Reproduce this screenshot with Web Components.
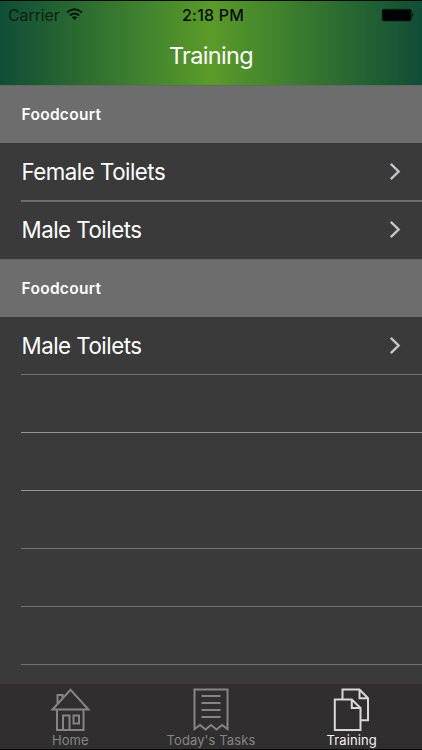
<!DOCTYPE html>
<html lang="en"><head><meta charset="utf-8"><title>Training</title>
<style>
html,body{margin:0;height:100%}
body{background:#3a3a3a;font-family:Inter,"Liberation Sans",sans-serif;overflow:hidden}
</style></head><body>
<training-screen></training-screen>
<script>
const define=(name,html,setup)=>customElements.define(name,class extends HTMLElement{
  connectedCallback(){
    if(this.shadowRoot)return;
    this.attachShadow({mode:'open'}).innerHTML=html;
    if(setup)setup(this);
  }
});

define('status-bar',`<style>
:host{display:grid;grid-template-columns:1fr auto 1fr;align-items:center;height:28px;padding:0 8px;box-sizing:border-box;color:#07140c;font-size:16px;line-height:28px}
.left{display:flex;align-items:center;gap:6px}.carrier{letter-spacing:-.1px;color:#0a2114}
.time{font-weight:500;font-size:16px;letter-spacing:.2px;color:#050b03;padding-left:4px}
.right{display:flex;justify-content:flex-end}svg{display:block}
.left svg{margin-top:-2px}.right svg{margin-top:-1px}
</style>
<div class="left"><span class="carrier">Carrier</span><svg width="17" height="13" viewBox="0 0 17 13" fill="none" stroke="#07170e" stroke-width="2"><path d="M1 4.6Q8.5-2.1 16 4.6M3.7 7.6Q8.5 3.3 13.3 7.6"/><path d="M5.8 9.3Q8.5 7.3 11.2 9.3L8.5 12Z" fill="#07170e" stroke="none"/></svg></div>
<span class="time">2:18 PM</span>
<div class="right"><svg width="33" height="14" viewBox="0 0 33 14"><rect x="1.2" y="1.2" width="29" height="11.8" rx="1.5" fill="#010302" stroke="#092816" stroke-width=".8"/><path d="M31.2 4.8q2.4 2.2 0 4.4z" fill="#031009"/></svg></div>`);

define('nav-header',`<style>
:host{display:block;height:85px;box-sizing:border-box;border-top:1px solid #030b04;background:linear-gradient(90deg,#104d37 0%,#246332 14%,#3c7e2f 31%,#5a9b28 50%,#3c7e2f 69%,#246332 86%,#104d37 100%)}
h1{margin:0;text-align:center;color:#fff;font-weight:400;font-size:23.5px;line-height:54px;height:56px;letter-spacing:-.65px}
</style><status-bar></status-bar><h1><slot></slot></h1>`);

define('section-title',`<style>
:host{display:flex;align-items:center;height:58px;box-sizing:border-box;padding:0 21.5px;background:#6d6d6d;border-top:1px solid #666;color:#fff;font-weight:600;font-size:15.5px;letter-spacing:.3px}
</style><slot></slot>`);

define('list-row',`<style>
:host{display:flex;height:58px;padding-left:21px;box-sizing:border-box;color:#fff;--line:#707070}
.body{flex:1;display:flex;align-items:center;justify-content:space-between;padding-right:21px;border-bottom:1px solid var(--line);font-size:22.3px;letter-spacing:-.5px}
.label{padding-left:.5px}
:host([bright]) .body{border-color:#969696}
:host([double]) .body{box-shadow:0 1px #68686a}
:host([last]) .body{border-color:transparent}
svg{display:block}
:host([empty]) svg{display:none}
</style><div class="body"><span class="label"><slot></slot></span><svg width="12" height="19" viewBox="0 0 12 19"><path d="M1.8 1.8 9.6 9.5 1.8 17.2" fill="none" stroke="#c5c5c9" stroke-width="2.4"/></svg></div>`);

const icons={
home:'<path d="M2.5 21.5 20.5 1.8 38.5 21.5ZM7.5 15.8V7h5v3.2M7 21.5V42h26.5V21.5M13 42V27.5h6.5V42M23.5 27.5h5.5v8h-5.5z"/>',
tasks:'<path d="M4.5 1.5h33v39.5l-5.5-4-5.5 4.5-5.5-4.5-5.5 4.5-5.5-4.5-5.5 4z"/><path d="M11.5 8h19M11.5 15h19M11.5 22h19M11.5 29h19" stroke-width="2"/>',
training:'<path d="M11.5 11V1.6h17l8.5 8.6v22H30M28.5 1.6v8.6H37M3.8 11.5h17L29.5 20v22H3.8zM20.8 11.5V20h8.7"/>'};
define('tab-item',`<style>
:host{display:flex;flex-direction:column;align-items:center;color:#858585;font-size:13px;line-height:16px;letter-spacing:.1px}
:host([active]){color:#f2f2f2}
svg{display:block;width:41px;height:44px;margin-top:4px;fill:none;stroke:currentColor;stroke-width:2}
:host([active]) svg{stroke:#d8d8d8}
.label{white-space:nowrap}
</style><svg viewBox="0 0 41 44"></svg><span class="label"><slot></slot></span>`,
el=>el.shadowRoot.querySelector('svg').innerHTML=icons[el.getAttribute('icon')]);

define('tab-bar',`<style>
:host{display:grid;grid-template-columns:repeat(3,1fr);height:66px;box-sizing:border-box;background:#302e2f;border-bottom:1px solid #050505}
</style><slot></slot>`);

define('training-screen',`<style>
:host{display:flex;flex-direction:column;height:750px;background:#3a3a3a}
main{flex:1;min-height:0;overflow:hidden}
</style>
<nav-header>Training</nav-header>
<main>
<section-title>Foodcourt</section-title>
<list-row double>Female Toilets</list-row>
<list-row last>Male Toilets</list-row>
<section-title>Foodcourt</section-title>
<list-row>Male Toilets</list-row>
<list-row empty bright></list-row><list-row empty bright></list-row><list-row empty></list-row><list-row empty></list-row><list-row empty></list-row>
</main>
<tab-bar><tab-item icon="home">Home</tab-item><tab-item icon="tasks">Today's Tasks</tab-item><tab-item icon="training" active>Training</tab-item></tab-bar>`);
</script></body></html>
